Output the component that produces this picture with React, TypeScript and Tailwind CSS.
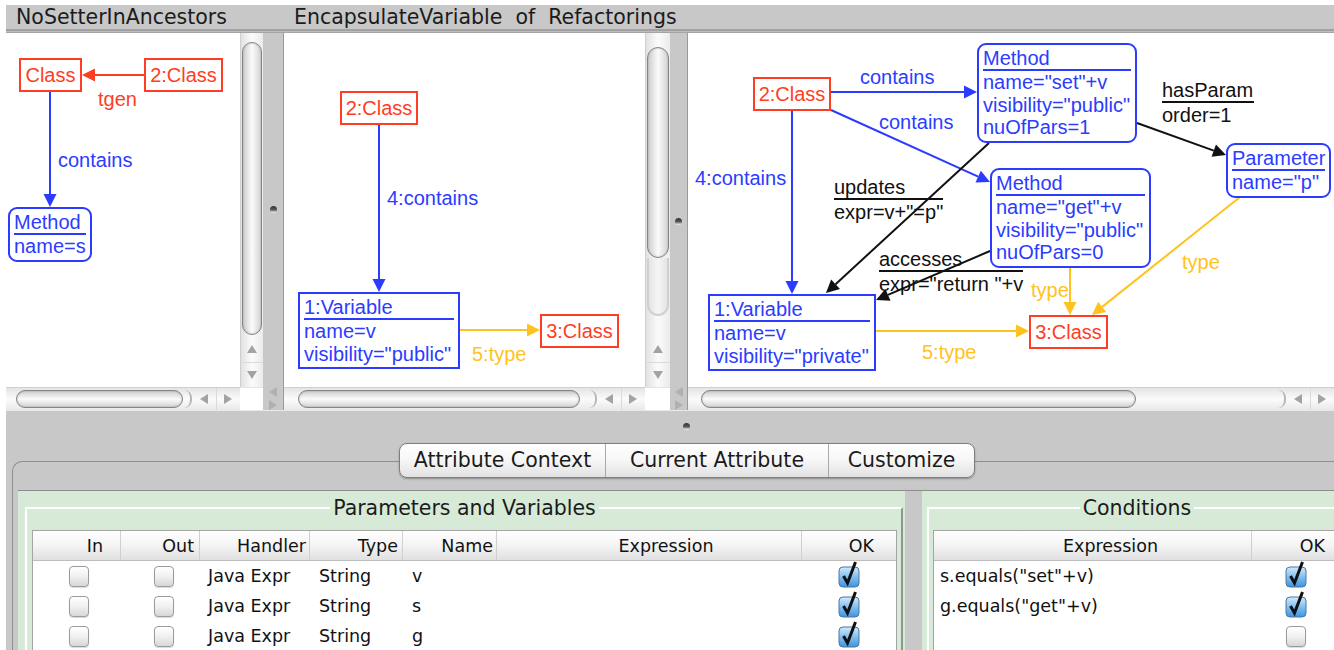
import { ReactNode } from 'react';

const RED = '#ff3d22';
const BLUE = '#2b3cff';
const GOLD = '#ffc21f';
const INK = '#111111';

type Tone = 'red' | 'blue';

const TONE: Record<Tone, string> = {
    red: 'border-[#ff3d22] text-[#ff3d22]',
    blue: 'border-[#2b3cff] text-[#2b3cff]'
};

const RULE: Record<Tone, string> = {
    red: 'bg-[#ff3d22]',
    blue: 'bg-[#2b3cff]'
};

type NodeDef = { x: number; y: number; w: number; title: string; tone: Tone; attrs?: string[]; round?: boolean };
type EdgeDef = { x1: number; y1: number; x2: number; y2: number; c: string };
type LabelDef = { x: number; cy: number; text: string; color: string };
type RuledDef = { x: number; cy: number; top: string; rule: number; bottom: string };

const Node = ({ n }: { n: NodeDef }) => {
    if (!n.attrs) {
        return (
            <div
                className={`absolute h-[34px] flex items-center justify-center border-2 bg-white leading-none ${TONE[n.tone]}`}
                style={{ left: n.x, top: n.y, width: n.w }}
            >
                {n.title}
            </div>
        );
    }
    return (
        <div
            className={`absolute border-2 bg-white px-[4px] py-[2px] ${TONE[n.tone]} ${n.round ? 'rounded-[9px]' : ''}`}
            style={{ left: n.x, top: n.y, width: n.w }}
        >
            <div className="leading-[22px] whitespace-nowrap">{n.title}</div>
            <div className={`h-[2px] ${RULE[n.tone]}`} />
            {n.attrs.map((a) => (
                <div key={a} className="leading-[22.5px] whitespace-nowrap">{a}</div>
            ))}
        </div>
    );
};

const Edge = ({ e }: { e: EdgeDef }) => {
    const dx = e.x2 - e.x1;
    const dy = e.y2 - e.y1;
    const len = Math.hypot(dx, dy);
    const ux = dx / len;
    const uy = dy / len;
    const L = 13;
    const W = 6.5;
    const bx = e.x2 - ux * L;
    const by = e.y2 - uy * L;
    return (
        <g>
            <line x1={e.x1} y1={e.y1} x2={bx} y2={by} stroke={e.c} strokeWidth={2} />
            <polygon
                points={`${e.x2},${e.y2} ${bx - uy * W},${by + ux * W} ${bx + uy * W},${by - ux * W}`}
                fill={e.c}
            />
        </g>
    );
};

const Diagram = ({ nodes, edges, labels, ruled = [] }: { nodes: NodeDef[]; edges: EdgeDef[]; labels: LabelDef[]; ruled?: RuledDef[] }) => (
    <div className="relative flex-1 h-full bg-white overflow-hidden font-['Liberation_Sans',Arial,sans-serif] text-[20px]">
        {labels.map((l, i) => (
            <div key={i} className={`absolute leading-[22px] whitespace-nowrap ${l.color}`} style={{ left: l.x, top: l.cy - 11 }}>
                {l.text}
            </div>
        ))}
        {ruled.map((r, i) => (
            <div key={i} className="absolute text-[#111111]" style={{ left: r.x, top: r.cy - 11 }}>
                <div className="leading-[22px] whitespace-nowrap">{r.top}</div>
                <div className="h-[2px] bg-[#111111]" style={{ width: r.rule }} />
                <div className="leading-[24px] whitespace-nowrap">{r.bottom}</div>
            </div>
        ))}
        <svg className="absolute inset-0 w-full h-full">
            {edges.map((e, i) => <Edge key={i} e={e} />)}
        </svg>
        {nodes.map((n, i) => <Node key={i} n={n} />)}
    </div>
);

// --- diagram data, coordinates are canvas-local ---

const P1_NODES: NodeDef[] = [
    { x: 13, y: 25, w: 63, title: 'Class', tone: 'red' },
    { x: 138, y: 25, w: 79, title: '2:Class', tone: 'red' },
    { x: 2, y: 174, w: 84, title: 'Method', attrs: ['name=s'], tone: 'blue', round: true }
];
const P1_EDGES: EdgeDef[] = [
    { x1: 138, y1: 42, x2: 76, y2: 42, c: RED },
    { x1: 44, y1: 59, x2: 44, y2: 174, c: BLUE }
];
const P1_LABELS: LabelDef[] = [
    { x: 92, cy: 66, text: 'tgen', color: 'text-[#ff3d22]' },
    { x: 52, cy: 127, text: 'contains', color: 'text-[#2b3cff]' }
];

const P2_NODES: NodeDef[] = [
    { x: 56, y: 58, w: 78, title: '2:Class', tone: 'red' },
    { x: 14, y: 259, w: 162, title: '1:Variable', attrs: ['name=v', 'visibility="public"'], tone: 'blue' },
    { x: 256, y: 281, w: 79, title: '3:Class', tone: 'red' }
];
const P2_EDGES: EdgeDef[] = [
    { x1: 95, y1: 92, x2: 95, y2: 259, c: BLUE },
    { x1: 176, y1: 297, x2: 256, y2: 297, c: GOLD }
];
const P2_LABELS: LabelDef[] = [
    { x: 103, cy: 165, text: '4:contains', color: 'text-[#2b3cff]' },
    { x: 188, cy: 321, text: '5:type', color: 'text-[#ffc21f]' }
];

const P3_NODES: NodeDef[] = [
    { x: 65, y: 44, w: 78, title: '2:Class', tone: 'red' },
    { x: 289, y: 10, w: 160, title: 'Method', attrs: ['name="set"+v', 'visibility="public"', 'nuOfPars=1'], tone: 'blue', round: true },
    { x: 302, y: 135, w: 161, title: 'Method', attrs: ['name="get"+v', 'visibility="public"', 'nuOfPars=0'], tone: 'blue', round: true },
    { x: 538, y: 110, w: 105, title: 'Parameter', attrs: ['name="p"'], tone: 'blue', round: true },
    { x: 20, y: 261, w: 168, title: '1:Variable', attrs: ['name=v', 'visibility="private"'], tone: 'blue' },
    { x: 341, y: 282, w: 79, title: '3:Class', tone: 'red' }
];
const P3_EDGES: EdgeDef[] = [
    { x1: 143, y1: 59, x2: 289, y2: 59, c: BLUE },
    { x1: 143, y1: 77, x2: 302, y2: 149, c: BLUE },
    { x1: 104, y1: 78, x2: 104, y2: 261, c: BLUE },
    { x1: 301, y1: 110, x2: 138, y2: 260, c: INK },
    { x1: 302, y1: 218, x2: 188, y2: 267, c: INK },
    { x1: 449, y1: 90, x2: 538, y2: 122, c: INK },
    { x1: 382, y1: 235, x2: 382, y2: 282, c: GOLD },
    { x1: 552, y1: 164, x2: 404, y2: 282, c: GOLD },
    { x1: 188, y1: 298, x2: 341, y2: 298, c: GOLD }
];
const P3_LABELS: LabelDef[] = [
    { x: 172, cy: 44, text: 'contains', color: 'text-[#2b3cff]' },
    { x: 191, cy: 89, text: 'contains', color: 'text-[#2b3cff]' },
    { x: 7, cy: 145, text: '4:contains', color: 'text-[#2b3cff]' },
    { x: 343, cy: 257, text: 'type', color: 'text-[#ffc21f]' },
    { x: 494, cy: 229, text: 'type', color: 'text-[#ffc21f]' },
    { x: 234, cy: 319, text: '5:type', color: 'text-[#ffc21f]' }
];
const P3_RULED: RuledDef[] = [
    { x: 146, cy: 154, top: 'updates', rule: 109, bottom: 'expr=v+"=p"' },
    { x: 474, cy: 57, top: 'hasParam', rule: 92, bottom: 'order=1' },
    { x: 191, cy: 226, top: 'accesses', rule: 144, bottom: 'expr="return "+v' }
];

// --- chrome ---

const Tri = ({ dir, fill = '#a3a3a3' }: { dir: 'up' | 'down' | 'left' | 'right'; fill?: string }) => {
    const pts = {
        up: '5,1 10,9 0,9',
        down: '0,1 10,1 5,9',
        left: '1,5 9,0 9,10',
        right: '1,0 9,5 1,10'
    }[dir];
    return (
        <svg width="10" height="10" viewBox="0 0 10 10">
            <polygon points={pts} fill={fill} />
        </svg>
    );
};

const TitleBar = ({ children, pad = '' }: { children?: ReactNode; pad?: string }) => (
    <div className="flex flex-col">
        <div className={`h-[24px] flex items-center whitespace-pre leading-none text-[20.5px] text-[#1b1b1b] ${pad}`}>{children}</div>
        <div className="h-[2px] bg-[#a1a1a1]" />
        <div className="h-[1px] bg-[#bdbdbd]" />
        <div className="h-[1px] bg-[#a4a4a4]" />
    </div>
);

const Knob = ({ className = '' }: { className?: string }) => (
    <div className={`w-[7px] h-[7px] rounded-full bg-gradient-to-b from-[#333333] via-[#555555] to-white ${className}`} />
);

const Splitter = ({ w, knob }: { w: string; knob: string }) => (
    <div className={`${w} flex flex-col`}>
        <TitleBar />
        <div className="flex-1 flex flex-col items-center">
            <Knob className={knob} />
            <div className="flex-1" />
            <div className="h-[23px] flex flex-col items-center justify-center gap-[3px]">
                <Tri dir="left" fill="#b0b0b0" />
                <Tri dir="right" fill="#b0b0b0" />
            </div>
        </div>
    </div>
);

const VScroll = ({ w, thumb, tail }: { w: string; thumb: string; tail?: string }) => (
    <div className={`${w} flex flex-col border-l border-[#cfcfcf] bg-gradient-to-r from-[#e2e2e2] via-[#fbfbfb] to-[#ebebeb]`}>
        <div className="flex-1 flex flex-col px-[1px]">
            <div className={`${thumb} rounded-full border-[1.5px] border-[#858585] bg-gradient-to-r from-[#cdcdcd] via-[#fbfbfb] to-[#d4d4d4] shadow-[inset_0_0_2px_rgba(0,0,0,0.25)]`} />
            {tail && <div className={`${tail} rounded-b-full border-2 border-t-0 border-[#d0d0d0] bg-gradient-to-r from-[#e4e4e4] via-[#f6f6f6] to-[#e4e4e4]`} />}
        </div>
        <div className="h-[50px] flex flex-col">
            <div className="flex-1 flex items-center justify-center border-b border-[#dadada]"><Tri dir="up" /></div>
            <div className="flex-1 flex items-center justify-center"><Tri dir="down" /></div>
        </div>
    </div>
);

const HScroll = ({ thumb }: { thumb: string }) => (
    <div className="flex-1 h-[23px] flex border-t border-[#cfcfcf] bg-gradient-to-b from-[#e4e4e4] via-[#fbfbfb] to-[#e9e9e9]">
        <div className="flex-1 flex items-center">
            <div className={`${thumb} h-[18px] rounded-full border-[1.5px] border-[#858585] bg-gradient-to-b from-[#cdcdcd] via-[#fbfbfb] to-[#d4d4d4] shadow-[inset_0_0_2px_rgba(0,0,0,0.25)]`} />
            <div className="flex-1" />
            <div className="w-[8px] h-[18px] rounded-r-full border-r-2 border-[#b6b6b6]" />
        </div>
        <div className="w-[48px] flex">
            <div className="flex-1 flex items-center justify-center border-r border-[#dadada]"><Tri dir="left" /></div>
            <div className="flex-1 flex items-center justify-center"><Tri dir="right" /></div>
        </div>
    </div>
);

const Box = () => (
    <div className="w-[20px] h-[21px] rounded-[4px] border border-[#9b9b9b] bg-gradient-to-b from-white via-[#f0f0f0] to-[#d8d8d8] shadow-[0_1px_1px_rgba(0,0,0,0.15)]" />
);

const Checked = () => (
    <svg width="24" height="28" viewBox="0 0 24 28" className="-mt-[5px]">
        <defs>
            <linearGradient id="cbg" x1="0" y1="0" x2="0" y2="1">
                <stop offset="0" stopColor="#d4ebfc" />
                <stop offset="0.5" stopColor="#80bff1" />
                <stop offset="1" stopColor="#3f92e0" />
            </linearGradient>
        </defs>
        <rect x="2" y="7" width="20" height="20" rx="4" fill="url(#cbg)" stroke="#4c76a3" />
        <path d="M6.5 16 L10.5 23 L18.5 2" fill="none" stroke="#111111" strokeWidth="3" />
    </svg>
);

const HEAD = 'h-[30px] border-b border-[#bdbdbd] bg-gradient-to-b from-white via-[#f4f4f4] to-[#e0e0e0]';
const HCELL = 'flex items-center pt-[2px] border-r border-[#d0d0d0]';

const PARAMS = ['v', 's', 'g'];
const CONDS: [string, boolean][] = [
    ['s.equals("set"+v)', true],
    ['g.equals("get"+v)', true],
    ['', false]
];

const App = () => {
    return (
        <div className="w-[1334px] h-[650px] overflow-hidden flex flex-col bg-[#c8c8c8] border-l-[6px] border-t-[5px] border-white font-['DejaVu_Sans',sans-serif] text-[#111111]">
            {/* graph panes */}
            <div className="h-[405px] flex">
                <div className="w-[257px] flex flex-col">
                    <TitleBar pad="pl-[10px]">NoSetterInAncestors</TitleBar>
                    <div className="h-[354px] flex">
                        <Diagram nodes={P1_NODES} edges={P1_EDGES} labels={P1_LABELS} />
                        <VScroll w="w-[23px]" thumb="mt-[9px] h-[293px]" />
                    </div>
                    <div className="h-[23px] flex">
                        <HScroll thumb="ml-[10px] w-[167px]" />
                        <div className="w-[23px] bg-white border-t border-[#e4e4e4]" />
                    </div>
                </div>

                <Splitter w="w-[20px]" knob="mt-[173px]" />

                <div className="w-[387px] flex flex-col">
                    <TitleBar pad="pl-[11px]">EncapsulateVariable  of  Refactorings</TitleBar>
                    <div className="h-[354px] flex border-l border-[#9a9a9a]">
                        <Diagram nodes={P2_NODES} edges={P2_EDGES} labels={P2_LABELS} />
                        <VScroll w="w-[25px]" thumb="mt-[14px] h-[211px]" tail="h-[58px]" />
                    </div>
                    <div className="h-[23px] flex border-l border-[#9a9a9a]">
                        <HScroll thumb="ml-[14px] w-[282px]" />
                        <div className="w-[25px] bg-white border-t border-[#e4e4e4]" />
                    </div>
                </div>

                <Splitter w="w-[17px]" knob="mt-[185px]" />

                <div className="flex-1 flex flex-col">
                    <TitleBar />
                    <div className="h-[354px] flex border-l border-[#9a9a9a]">
                        <Diagram nodes={P3_NODES} edges={P3_EDGES} labels={P3_LABELS} ruled={P3_RULED} />
                    </div>
                    <div className="h-[23px] flex border-l border-[#9a9a9a]">
                        <HScroll thumb="ml-[13px] w-[435px]" />
                    </div>
                </div>
            </div>

            {/* attribute editor */}
            <div className="flex-1 flex flex-col">
                <div className="h-[33px] border-t border-[#e9e9e9]">
                    <Knob className="ml-[677px] mt-[12px]" />
                </div>

                <div className="relative z-10 h-[35px] flex pl-[393px]">
                    <div className="flex rounded-[8px] border border-[#7f7f7f] bg-gradient-to-b from-white via-[#f6f6f6] to-[#e2e2e2] shadow-[0_1px_2px_rgba(0,0,0,0.3)] overflow-hidden text-[20.5px] leading-none text-[#1b1b1b]">
                        <div className="w-[206px] flex items-center justify-center border-r border-[#a9a9a9]">Attribute Context</div>
                        <div className="w-[223px] flex items-center justify-center border-r border-[#a9a9a9]">Current Attribute</div>
                        <div className="w-[145px] flex items-center justify-center">Customize</div>
                    </div>
                </div>

                <div className="-mt-[17px] ml-[6px] flex-1 flex flex-col border-l border-t border-[#8f8f8f] rounded-tl-[10px] pl-[5px] pt-[28px]">
                    <div className="flex-1 flex border-t border-[#8d8d8d]">
                        <div className="w-[887px] bg-[#d7ead7] pt-[5px] pl-[7px] pr-[2px]">
                            <fieldset className="h-full min-w-0 border-2 border-b-0 border-white border-r-[#8d978d] pl-[5px] pr-[4px]">
                                <legend className="mx-auto px-[3px] text-[20.5px] leading-[24px] text-[#1b1b1b]">Parameters and Variables</legend>
                                <div className="mt-[10px] border border-[#a5a5a5] bg-white text-[17.5px]">
                                    <div className={`grid grid-cols-[88px_79px_110px_93px_94px_305px_1fr] ${HEAD}`}>
                                        <div className={`${HCELL} justify-end pr-[17px]`}>In</div>
                                        <div className={`${HCELL} justify-end pr-[5px]`}>Out</div>
                                        <div className={`${HCELL} justify-end pr-[3px]`}>Handler</div>
                                        <div className={`${HCELL} justify-end pr-[4px]`}>Type</div>
                                        <div className={`${HCELL} justify-end pr-[3px]`}>Name</div>
                                        <div className={`${HCELL} justify-center pl-[34px]`}>Expression</div>
                                        <div className="flex items-center pt-[2px] justify-end pr-[22px]">OK</div>
                                    </div>
                                    {PARAMS.map((name) => (
                                        <div key={name} className="grid grid-cols-[88px_79px_110px_93px_94px_305px_1fr] h-[30px] items-center">
                                            <div className="flex justify-center pl-[3px]"><Box /></div>
                                            <div className="flex justify-center pl-[6px]"><Box /></div>
                                            <div className="pl-[8px] whitespace-nowrap">Java Expr</div>
                                            <div className="pl-[9px]">String</div>
                                            <div className="pl-[9px]">{name}</div>
                                            <div />
                                            <div className="flex justify-center"><Checked /></div>
                                        </div>
                                    ))}
                                </div>
                            </fieldset>
                        </div>

                        <div className="w-[17px]" />

                        <div className="flex-1 overflow-hidden bg-[#d7ead7] pt-[5px] pl-[5px]">
                            <fieldset className="w-[420px] h-full min-w-0 border-2 border-b-0 border-white border-r-[#8d978d] pl-[4px] pr-[4px]">
                                <legend className="mx-auto px-[3px] text-[20.5px] leading-[24px] text-[#1b1b1b]">Conditions</legend>
                                <div className="mt-[10px] border border-[#a5a5a5] bg-white text-[17.5px]">
                                    <div className={`grid grid-cols-[318px_1fr] ${HEAD}`}>
                                        <div className={`${HCELL} justify-center pl-[36px]`}>Expression</div>
                                        <div className="flex items-center pt-[2px] justify-end pr-[15px]">OK</div>
                                    </div>
                                    {CONDS.map(([expr, ok], i) => (
                                        <div key={i} className="grid grid-cols-[318px_1fr] h-[30px] items-center">
                                            <div className="pl-[6px] whitespace-nowrap">{expr}</div>
                                            <div className="flex justify-center">{ok ? <Checked /> : <Box />}</div>
                                        </div>
                                    ))}
                                </div>
                            </fieldset>
                        </div>
                    </div>
                </div>
            </div>
        </div>
    );
};

export default App;
